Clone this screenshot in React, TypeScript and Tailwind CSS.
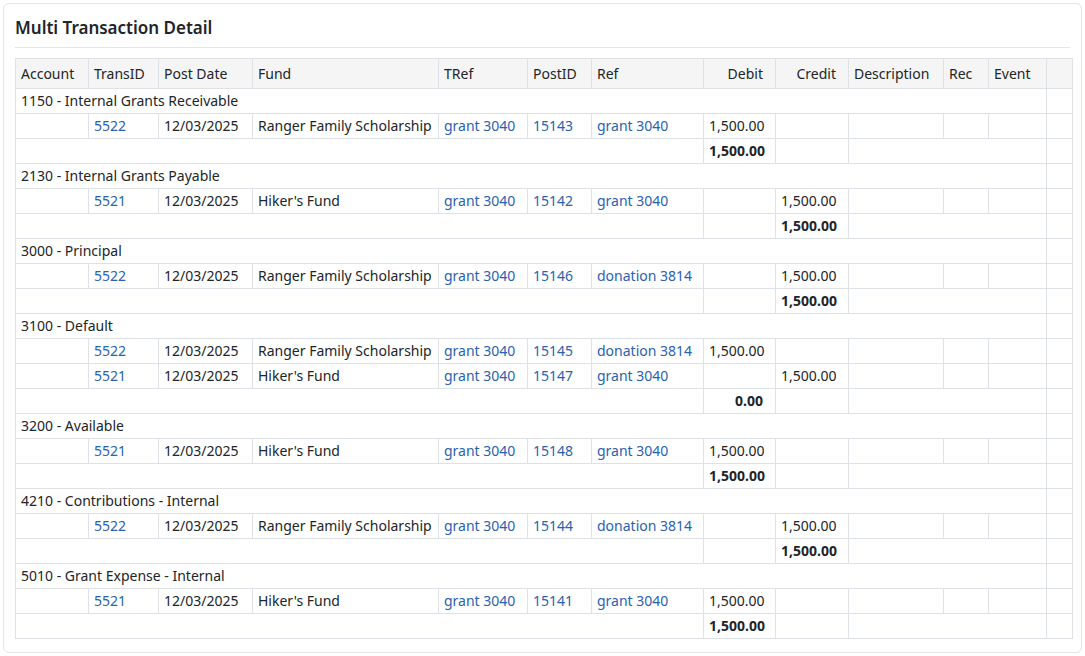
const widths = [73, 70, 94, 186, 89, 64, 112, 72, 73, 95, 45, 58, 26];
const headers = ["Account", "TransID", "Post Date", "Fund", "TRef", "PostID", "Ref", "Debit", "Credit", "Description", "Rec", "Event", ""];

type Line = { t: string; fund: string; post: string; ref: string; debit?: string; credit?: string };
type Group = { name: string; lines: Line[]; debit?: string; credit?: string };

const RF = "Ranger Family Scholarship";
const HF = "Hiker's Fund";
const groups: Group[] = [
  { name: "1150 - Internal Grants Receivable", lines: [{ t: "5522", fund: RF, post: "15143", ref: "grant 3040", debit: "1,500.00" }], debit: "1,500.00" },
  { name: "2130 - Internal Grants Payable", lines: [{ t: "5521", fund: HF, post: "15142", ref: "grant 3040", credit: "1,500.00" }], credit: "1,500.00" },
  { name: "3000 - Principal", lines: [{ t: "5522", fund: RF, post: "15146", ref: "donation 3814", credit: "1,500.00" }], credit: "1,500.00" },
  {
    name: "3100 - Default",
    lines: [
      { t: "5522", fund: RF, post: "15145", ref: "donation 3814", debit: "1,500.00" },
      { t: "5521", fund: HF, post: "15147", ref: "grant 3040", credit: "1,500.00" },
    ],
    debit: "0.00",
  },
  { name: "3200 - Available", lines: [{ t: "5521", fund: HF, post: "15148", ref: "grant 3040", debit: "1,500.00" }], debit: "1,500.00" },
  { name: "4210 - Contributions - Internal", lines: [{ t: "5522", fund: RF, post: "15144", ref: "donation 3814", credit: "1,500.00" }], credit: "1,500.00" },
  { name: "5010 - Grant Expense - Internal", lines: [{ t: "5521", fund: HF, post: "15141", ref: "grant 3040", debit: "1,500.00" }], debit: "1,500.00" },
];

const td = "border border-[#dee2e6] px-[5px] h-[25px] leading-[24px] whitespace-nowrap";
const link = "text-[#2a62b0]";

export default function App() {
  return (
    <div className="p-[3px] bg-white text-[#212529] text-[14px]" style={{ fontFamily: '"Noto Sans", "Open Sans", sans-serif' }}>
      <div className="border border-[#e3e5e8] rounded-md px-[11px] pt-[12px] pb-[12px] h-[650px]">
        <h2 className="text-[17px] font-semibold pb-[7px] border-b border-[#e3e5e8] mb-[10px] leading-[24px]">Multi Transaction Detail</h2>
        <table className="table-fixed border-collapse w-[1058px]">
          <colgroup>
            {widths.map((w, i) => (
              <col key={i} style={{ width: w }} />
            ))}
          </colgroup>
          <thead>
            <tr className="bg-[#f5f5f5]">
              {headers.map((h, i) => (
                <th key={i} className={`${td} h-[30px] font-normal ${i === 7 || i === 8 ? "text-right pr-[12px]" : "text-left"}`}>
                  {h}
                </th>
              ))}
            </tr>
          </thead>
          <tbody>
            {groups.map((g) => (
              <>
                <tr key={g.name}>
                  <td colSpan={12} className={td}>{g.name}</td>
                  <td className={td}></td>
                </tr>
                {g.lines.map((l, i) => (
                  <tr key={g.name + i}>
                    <td className={td}></td>
                    <td className={`${td} ${link}`}>{l.t}</td>
                    <td className={td}>12/03/2025</td>
                    <td className={td}>{l.fund}</td>
                    <td className={`${td} ${link}`}>grant 3040</td>
                    <td className={`${td} ${link}`}>{l.post}</td>
                    <td className={`${td} ${link}`}>{l.ref}</td>
                    <td className={`${td} text-right pr-[12px]`}>{l.debit}</td>
                    <td className={`${td} text-right pr-[12px]`}>{l.credit}</td>
                    <td className={td}></td>
                    <td className={td}></td>
                    <td className={td}></td>
                    <td className={td}></td>
                  </tr>
                ))}
                <tr key={g.name + "t"}>
                  <td colSpan={7} className={td}></td>
                  <td className={`${td} text-right pr-[12px] font-bold`}>{g.debit}</td>
                  <td className={`${td} text-right pr-[12px] font-bold`}>{g.credit}</td>
                  <td colSpan={3} className={td}></td>
                  <td className={td}></td>
                </tr>
              </>
            ))}
          </tbody>
        </table>
      </div>
    </div>
  );
}
